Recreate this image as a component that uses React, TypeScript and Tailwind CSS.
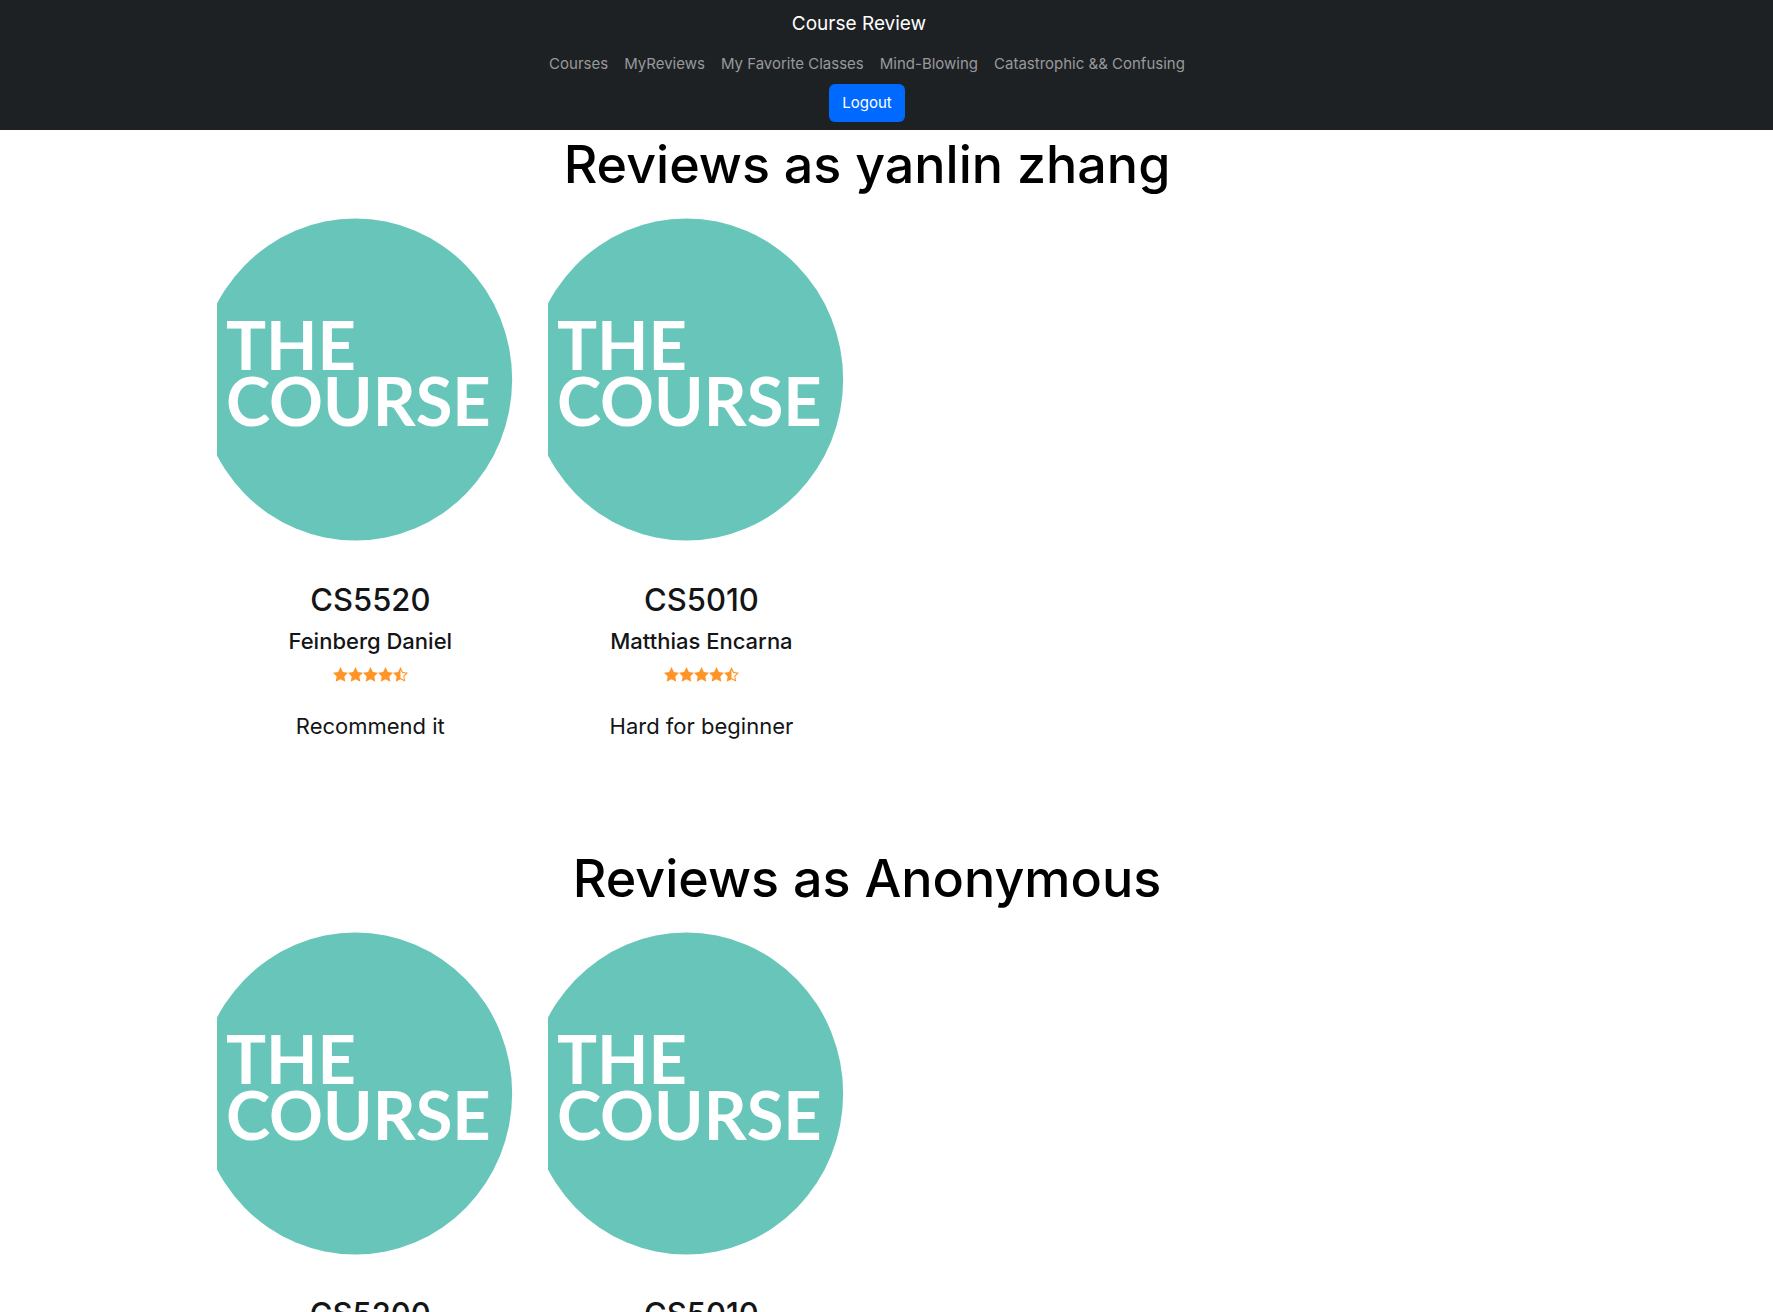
import React from "react";

type Review = { course: string; professor: string; comment: string };

const links = ["Courses", "MyReviews", "My Favorite Classes", "Mind-Blowing", "Catastrophic && Confusing"];

const sections: { title: string; reviews: Review[] }[] = [
  {
    title: "Reviews as yanlin zhang",
    reviews: [
      { course: "CS5520", professor: "Feinberg Daniel", comment: "Recommend it" },
      { course: "CS5010", professor: "Matthias Encarna", comment: "Hard for beginner" },
    ],
  },
  {
    title: "Reviews as Anonymous",
    reviews: [
      { course: "CS5200", professor: "Feinberg Daniel", comment: "Recommend it" },
      { course: "CS5010", professor: "Matthias Encarna", comment: "Hard for beginner" },
    ],
  },
];

const STAR = "M7.5 0.1 L9.9 5 L15 5.7 L11.3 9.4 L12.3 14.8 L7.5 12.3 L2.7 14.8 L3.7 9.4 L0 5.7 L5.1 5 Z";

function Star({ half = false }: { half?: boolean }) {
  return (
    <svg viewBox="0 0 15 15" className="size-[15px]" fill="#ff9529" aria-hidden="true">
      {half ? (
        <path fillRule="evenodd" d={STAR + " M7.5 2.9 V11 L10.9 12.7 L10.2 8.9 L12.7 6.5 L9.2 6 Z"} />
      ) : (
        <path d={STAR} />
      )}
    </svg>
  );
}

function CourseLogo() {
  return (
    <svg viewBox="0 0 308 324" className="block w-full" role="img" aria-label="The Course">
      <ellipse cx="138.7" cy="162" rx="157.3" ry="161.5" fill="#67c6b9" />
      <g fill="#fff" fontFamily="Lato, sans-serif" fontWeight="700" fontSize="67">
        <text x="9" y="152">THE</text>
        <text x="9" y="209">COURSE</text>
      </g>
    </svg>
  );
}

function ReviewCard({ review }: { review: Review }) {
  return (
    <article className="flex flex-col items-center text-[#131516]">
      <CourseLogo />
      <h2 className="mt-10 text-[31px] leading-[38px] font-medium">{review.course}</h2>
      <h3 className="mt-2 text-[22px] leading-7 font-medium">{review.professor}</h3>
      <div className="mt-3 flex" role="img" aria-label="4.5 out of 5 stars">
        <Star />
        <Star />
        <Star />
        <Star />
        <Star half />
      </div>
      <p className="mt-[26px] text-[22px] leading-9">{review.comment}</p>
    </article>
  );
}

export default function App() {
  return (
    <div className="h-screen overflow-hidden bg-white font-['Inter',sans-serif]">
      <nav className="flex flex-col items-center bg-[#1e2124] pr-[39px] pb-2">
        <a href="#" className="mr-4 pt-2 pb-1 text-[19px] leading-8 text-white">
          Course Review
        </a>
        <div className="flex h-10 items-center gap-4 text-[15px] text-[#98999b]">
          {links.map((label) => (
            <a key={label} href="#">
              {label}
            </a>
          ))}
        </div>
        <button type="button" className="h-[38px] rounded-md bg-[#0069ff] px-[13px] text-[15px] text-white">
          Logout
        </button>
      </nav>
      <main className="pr-[39px]">
        {sections.map((section) => (
          <section key={section.title} className="mb-[100px]">
            <h1 className="text-center text-[52px] leading-[70px] font-medium text-black">{section.title}</h1>
            <div className="mx-auto mt-[18px] grid w-3/4 grid-cols-4 gap-6">
              {section.reviews.map((review) => (
                <ReviewCard key={review.course} review={review} />
              ))}
            </div>
          </section>
        ))}
      </main>
    </div>
  );
}
